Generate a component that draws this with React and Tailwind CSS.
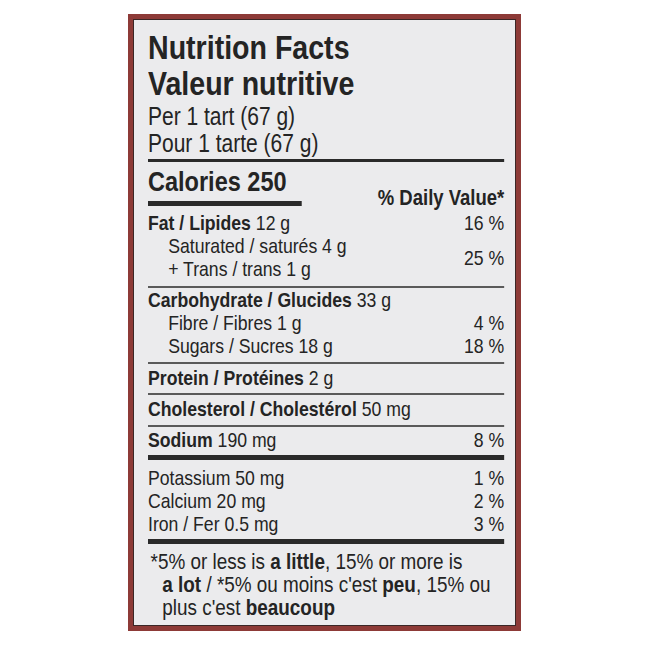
// Nutrition Facts label (Canadian bilingual)
// No condensed face installed, so the content block is squeezed horizontally.
const font = "font-['Liberation_Sans',Arial,sans-serif]";

function ThinRule({ mt = "mt-[5px]" }) {
  return <div className={`${mt} h-[2px] bg-[#5a5a5a]`} />;
}

function ThickRule({ mt = "mt-[4px]" }) {
  return <div className={`${mt} h-[5px] bg-[#2a2a2a]`} />;
}

function Row({ label, amount, pct, indent, className = "" }) {
  return (
    <div className={`flex justify-between text-[21px] leading-[23px] ${className}`}>
      <div className={indent ? "pl-[24px]" : ""}>
        {label && <span className="font-bold">{label} </span>}
        {amount}
      </div>
      {pct && <div>{pct}</div>}
    </div>
  );
}

export default function App() {
  return (
    <div className="w-[650px] h-[650px] bg-white pt-[14px] pl-[128px]">
      <div className="w-[393px] h-[617px] border-[5px] border-[#8d3a37]">
        <div
          className={`h-full border border-[#3a2626] bg-[#ebebed] text-[#242424] pl-[14px] pr-[11px] pt-[9px] ${font}`}
        >
          <div className="w-[424px] scale-x-[0.84] origin-left">
            <div className="text-[34px] leading-[36px] font-bold">
              <div>Nutrition Facts</div>
              <div>Valeur nutritive</div>
            </div>
            <div className="mt-[2px] text-[25px] leading-[27px]">
              <div>Per 1 tart (67 g)</div>
              <div>Pour 1 tarte (67 g)</div>
            </div>
            <div className="mt-[2px] h-[3px] bg-[#2a2a2a]" />

            <div className="flex justify-between items-end">
              <div className="w-[183px]">
                <div className="mt-[5px] text-[28px] leading-[30px] font-bold">Calories 250</div>
                <div className="mt-[4px] h-[5px] bg-[#2a2a2a]" />
              </div>
              <div className="text-[22px] leading-[16px] font-bold">% Daily Value*</div>
            </div>

            <Row className="mt-[5px]" label="Fat / Lipides" amount="12 g" pct="16 %" />
            <div className="flex justify-between items-center text-[21px] leading-[23px]">
              <div className="pl-[24px]">
                <div>Saturated / saturés 4 g</div>
                <div>+ Trans / trans 1 g</div>
              </div>
              <div>25 %</div>
            </div>
            <ThinRule mt="mt-[6px]" />

            <Row label="Carbohydrate / Glucides" amount="33 g" />
            <Row indent amount="Fibre / Fibres 1 g" pct="4 %" />
            <Row indent amount="Sugars / Sucres 18 g" pct="18 %" />
            <ThinRule mt="mt-[5px]" />

            <Row className="mt-[2px]" label="Protein / Protéines" amount="2 g" />
            <ThinRule mt="mt-[4px]" />

            <Row className="mt-[2px]" label="Cholesterol / Cholestérol" amount="50 mg" />
            <ThinRule mt="mt-[5px]" />

            <Row className="mt-[1px]" label="Sodium" amount="190 mg" pct="8 %" />
            <ThickRule mt="mt-[4px]" />

            <Row className="mt-[6px]" amount="Potassium 50 mg" pct="1 %" />
            <Row amount="Calcium 20 mg" pct="2 %" />
            <Row amount="Iron / Fer 0.5 mg" pct="3 %" />
            <ThickRule mt="mt-[4px]" />

            <div className="mt-[6px] pl-[17px] -indent-[14px] text-[22.5px] leading-[23px]">
              *5% or less is <span className="font-bold">a little</span>, 15% or more is
              <br />
              <span className="font-bold">a lot</span> / *5% ou moins c'est{" "}
              <span className="font-bold">peu</span>, 15% ou
              <br />
              plus c'est <span className="font-bold">beaucoup</span>
            </div>
          </div>
        </div>
      </div>
    </div>
  );
}
